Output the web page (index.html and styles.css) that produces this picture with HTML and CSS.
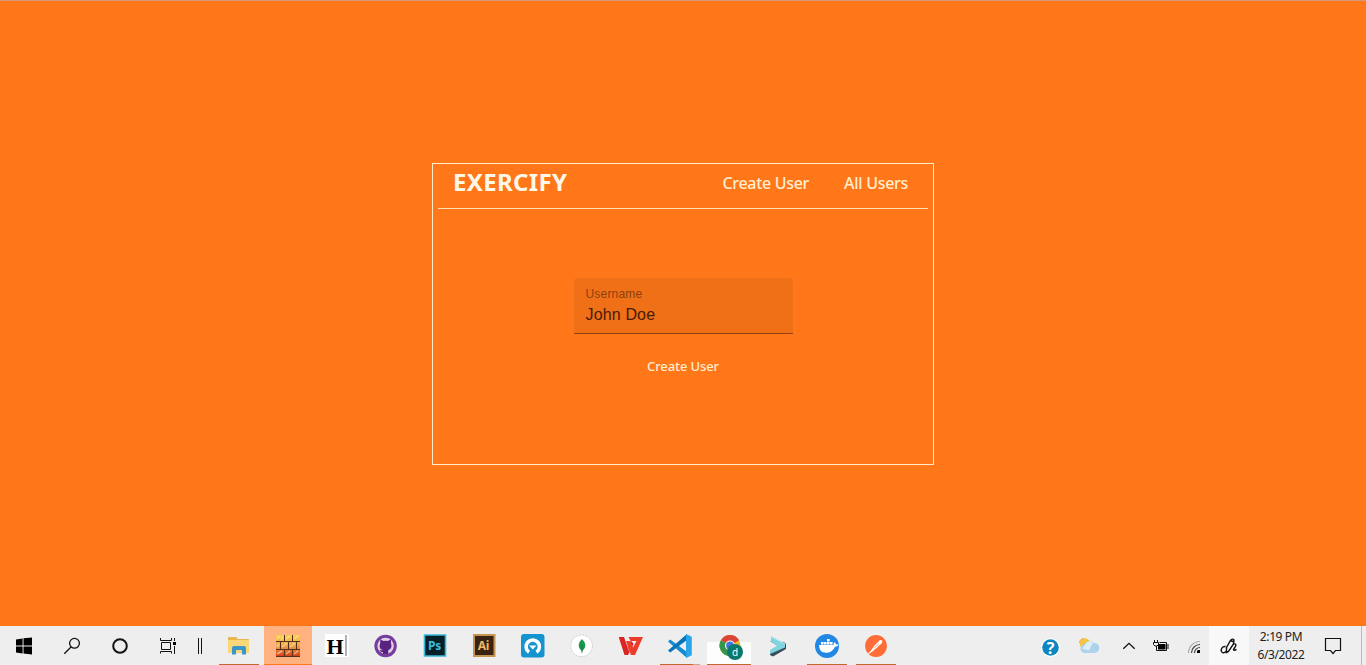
FILE: index.html
```
<!DOCTYPE html>
<html lang="en">
<head>
<meta charset="utf-8">
<title>Exercify</title>
<link rel="stylesheet" href="styles.css">
</head>
<body>
<main class="desktop">
  <section class="card">
    <header class="card-header">
      <h1 class="brand">EXERCIFY</h1>
      <nav class="nav"><a class="nav-create">Create User</a><a class="nav-all">All Users</a></nav>
    </header>
    <form class="form">
      <label class="field"><span class="field-label">Username</span><span class="field-value">John Doe</span></label>
      <button class="submit" type="button">Create User</button>
    </form>
  </section>
</main>
<footer class="taskbar">
  <div class="system">
    <svg class="sys" viewBox="0 626 48 39"><path d="M16 639.4l6.600-.9v7.100H16zM23.500 638.300l8.500-.9v8.200h-8.500zM16 646.500h6.600v7l-6.600-.9zM23.500 646.500H32v7.900l-8.500-.9z"/></svg>
    <svg class="sys" viewBox="48 626 48 39"><g fill="none" stroke="#111" stroke-width="1.3"><circle cx="74.500" cy="643.300" r="4.900"/><path d="M71 647l-6.700 6.700"/></g></svg>
    <svg class="sys" viewBox="96 626 48 39"><circle cx="120" cy="646" r="6.800" fill="none" stroke="#111" stroke-width="2"/></svg>
    <svg class="sys" viewBox="144 626 48 39"><path d="M160.500 638v2.500h11V638M160.500 653.500V651.500h11v2M161.500 642.500h9v7h-9zM174.500 638v3M174.500 646v8" fill="none" stroke="#111"/><path d="M173 642h3v3h-3z"/></svg>
    <svg class="divider" viewBox="192 626 22 39"><path d="M198.500 638v16M201.500 638v16" stroke="#111"/></svg>
  </div>
  <div class="apps">
    <svg class="app" viewBox="214 626 49 39"><path d="M228 638q0-1 1-1h7l2 2h10q1 0 1 1v13h-21z" fill="#e9b64d"/><path d="M229 640h20v13h-21v-12z" fill="#fad779"/><path d="M232 654.500v-6.500q0-2 2-2h10q2 0 2 2v6.500h-4v-4.500h-6v4.500z" fill="#3d96c8"/><path class="run" d="M219 664h40v1h-40z"/></svg>
    <svg class="app" viewBox="263 626 49 39"><defs><linearGradient id="brick" x1="0" y1="635" x2="0" y2="657" gradientUnits="userSpaceOnUse"><stop stop-color="#f8d04a"/><stop offset=".5" stop-color="#efa04b"/><stop offset="1" stop-color="#d63415"/></linearGradient></defs><path d="M264 626h48v39h-48z" fill="#ffb27f"/><path d="M276 635h24v22h-24z" fill="#54301d"/><path d="M276 635h8v6h-8zM285 635h7v6h-7zM293 635h7v6h-7zM276 642h4v7h-4zM281 642h7v7h-7zM289 642h7v7h-7zM297 642h3v7h-3zM276 650h8v6h-8zM285 650h7v6h-7zM293 650h7v6h-7z" fill="url(#brick)"/><path d="M277 639l3-3M281 640l2-4M286 639l4-3M294 639l4-3M277 647l2-3M282 647l5-4M290 647l5-4M277 654l5-3M286 654l4-3M294 654l4-3" stroke="#fff0aa" stroke-width="1.500" opacity=".6"/><path d="M264 664h48v1h-48z" fill="#ff7817"/></svg>
    <svg class="app" viewBox="312 626 49 39"><path d="M325 634h24v23h-24z" fill="#fff"/><text x="326.500" y="653.500" class="h-letter">H</text><path d="M346 635v21" stroke="#888" stroke-width="1.300"/></svg>
    <svg class="app" viewBox="361 626 49 39"><circle cx="385.600" cy="646" r="11.200" fill="#773b9d"/><circle cx="385.600" cy="646" r="8.200" fill="#ddd2e5"/><path d="M380.300 639.500l3.300 1.500q2-.5 4 0l3.300-1.500.1 3.900c1.300 3.500-.4 6-2.700 6.700v4h-5.400v-2c-2 .3-2.700-.8-3.500-2.200 1.500.4 2 .7 3.500.2-2.800-.7-4.100-3.400-2.700-6.700z" fill="#5b2380"/></svg>
    <svg class="app" viewBox="410 626 49 39"><path d="M424.500 635h21v21h-21z" fill="#061e28" stroke="#38b9d8" stroke-width="1.600"/><text x="428" y="650" class="adobe ps">Ps</text></svg>
    <svg class="app" viewBox="459 626 49 39"><path d="M474 635h20.500v21H474z" fill="#382313" stroke="#c49452" stroke-width="2"/><text x="477.700" y="650" class="adobe ai">Ai</text></svg>
    <svg class="app" viewBox="508 626 49 39"><rect x="521" y="634" width="23.500" height="23.500" rx="3" fill="#1594cf"/><path d="M529 652.200a6.700 6.700 0 1 1 7.500 0" fill="none" stroke="#fff" stroke-width="3.600"/><path d="M529 645.500h7.500l-3.700 4z" fill="#fff"/></svg>
    <svg class="app" viewBox="557 626 49 39"><circle cx="581.600" cy="645.800" r="10.800" fill="#fff" stroke="#bbb" stroke-width=".7" stroke-dasharray="2 1"/><path d="M582 639q-7 6.500 0 12.500 7-6 0-12.500" fill="#16994b"/><path d="M582 645v8" stroke="#157240" stroke-width=".8"/></svg>
    <svg class="app" viewBox="606 626 49 39"><path d="M618.700 637h5.300l3.500 10 4-6 2 3-5.500 11h-3.500z" fill="#d92524"/><path d="M626 641h4.500l2.500 6.500 3.500-6.500h-6l-2-4h14.500l-8 18H631z" fill="#ee3c2b"/><path d="M627.500 647l3.500 8" stroke="#f58b70" stroke-width=".8"/></svg>
    <svg class="app" viewBox="655 626 49 39"><path d="M668 641.500l2.200-2L687 652v6z" fill="#168bd1"/><path d="M668 650.500l2.200 2L687 640v-6z" fill="#0875b8"/><path d="M686 634l5.800 2.700v18.600L686 658z" fill="#29a6ea"/><path class="run" d="M660 664h33v1h-33z"/><path d="M693 664h7v1h-7z" fill="#d5a38a"/></svg>
    <svg class="app" viewBox="704 626 49 39"><path d="M707 642h44v23h-44z" fill="#fdfdfd"/><circle cx="730" cy="645.500" r="10.500" fill="#e9bd30"/><path d="M720.900 640.250A10.500 10.500 0 0 1 739.100 640.250L730 645.500z" fill="#dc4437"/><path d="M720.900 640.250A10.500 10.500 0 0 0 730 656l3-7-3-3.500z" fill="#35964b"/><circle cx="730" cy="645.500" r="5" fill="#fff"/><circle cx="730" cy="645.500" r="3.900" fill="#3e79d8"/><circle cx="735" cy="652" r="8" fill="#08796b"/><text x="735" y="655.500" class="profile">d</text><path class="run" d="M707 664h44v1h-44z"/></svg>
    <svg class="app" viewBox="753 626 49 39"><path d="M770 641l8 5-8 5v4l3 1.500 13-7.500v-5l-2-2z" fill="#394e5b"/><path d="M771 636l14 7.500v4L770 654v-4l7-4.300-6-4.200z" fill="#80d4df"/><path d="M771 636.500l14 7.500" stroke="#b7edf0"/></svg>
    <svg class="app" viewBox="802 626 49 39"><circle cx="827" cy="646" r="12" fill="#2388e3"/><path d="M819 645h14.500q0-2 1-3 1.500 1 1.500 2.500 1.500-.5 2.700.2-1 2-3.700 2-2.500 6-9 6-7 0-7-7.700M821 642h2.600v2.600H821zm3 0h2.600v2.600H824zm3 0h2.600v2.600H827zm3 0h2.600v2.600H830zm-3-3h2.600v2.600H827z" fill="#fff"/><path class="run" d="M807 664h40v1h-40z"/></svg>
    <svg class="app" viewBox="851 626 49 39"><circle cx="876" cy="646" r="10.900" fill="#ff6c37"/><path d="M870 652l4-6 6-6q3-.5 2 3l-6.500 6z" fill="#fff"/><path d="M868.500 653.500l5-3.500" stroke="#fff" stroke-width="1.200"/><path d="M874 648l5-4" stroke="#ff6c37" stroke-width=".6"/><path class="run" d="M856 664h40v1h-40z"/></svg>
  </div>
  <div class="tray">
    <svg class="tray-icon" viewBox="1031 626 39 39"><circle cx="1050.500" cy="647.500" r="9.500" fill="#fff"/><circle cx="1050.500" cy="647.500" r="8.300" fill="#0e86c2"/><text x="1050.500" y="653.500" class="help">?</text></svg>
    <svg class="tray-icon" viewBox="1070 626 39 39"><circle cx="1085" cy="643.500" r="5.300" fill="#f8c446"/><path d="M1079.500 643q0-4 4.500-4.500" fill="none" stroke="#f6a92b"/><path d="M1085 653a4.500 4.500 0 0 1 0-9 5.500 5.500 0 0 1 9-1 5 5 0 0 1 .5 10z" fill="#acd2ec"/><path d="M1085 645a5 5 0 0 1 8-2.500l-4 8-7-2z" fill="#dceefa"/></svg>
    <svg class="tray-icon" viewBox="1109 626 39 39"><path d="M1123.300 648.700l5.700-5.400 5.700 5.400" fill="none" stroke="#111" stroke-width="1.300"/></svg>
    <svg class="battery" viewBox="1148 626 30 39"><path d="M1154.500 640v2M1157.500 640v2M1153.500 642.500h5v2l-1.500 1.500h-2l-1.500-1.500zM1156.500 646v4.500h10v-8h-7M1168 644v5" fill="none" stroke="#111"/><path d="M1158 644h7.500v5.500h-7.500z"/></svg>
    <svg class="wifi" viewBox="1178 626 31 39"><g fill="none" stroke-width="1.200"><path d="M1188.500 653a11.500 11.500 0 0 1 11.500-11.500" stroke="#aaa"/><path d="M1191.500 653a8.500 8.500 0 0 1 8.500-8.500M1194.500 653a5.500 5.500 0 0 1 5.500-5.500" stroke="#444"/></g><path d="M1197 653v-2l1-1h2v3z"/></svg>
    <svg class="ink" viewBox="1209 626 40 39"><path d="M1225.500 646.500c-3-.5-5 2.500-4 5 1 2 3.500 1.500 4.500-.5M1226.500 652.500v-5l4-7q2-2.500 3.500-.5l-.5 4-5 7.500zM1233.500 644c2-.5 3 .5 2 2.500l-2 3q0 1.500 3 0M1230.500 640.500l3.500 1.500" fill="none" stroke="#111" stroke-width="1.400"/></svg>
    <div class="clock"><span class="time">2:19 PM</span><span class="date">6/3/2022</span></div>
    <svg class="notice" viewBox="1313 626 48 39"><path d="M1325.500 638.500h15v12h-5l-2.500 3-2.500-3h-5z" fill="none" stroke="#111" stroke-width="1.200"/></svg>
    <div class="show-desktop"></div>
  </div>
</footer>
</body>
</html>
```
FILE: styles.css
```
* { box-sizing: border-box; }
body { margin: 0; height: 665px; overflow: hidden; display: flex; flex-direction: column; font-family: "Noto Sans", sans-serif; }
.desktop { height: 626px; background: #ff7719; border-top: 1px solid #d6987a; display: flex; justify-content: center; align-items: flex-start; padding-top: 162px; }
.card { width: 502px; height: 302px; border: 1px solid #ffecc8; padding: 0 5px; }
.card-header { height: 45px; border-bottom: 1px solid #ffe0b0; display: flex; justify-content: space-between; padding: 0 20px 8px 15px; align-items: center; color: #fff8e8; }
.brand { margin: 0; font-size: 24px; line-height: 36px; font-weight: 700; letter-spacing: .35px; }
.nav { display: flex; gap: 35px; font-size: 16px; line-height: 24px; font-weight: 500; letter-spacing: -.3px; color: #ffeed0; padding-top: 2px; }
.form { display: flex; flex-direction: column; align-items: center; padding-top: 69px; }
.field { width: 219px; height: 56px; display: flex; flex-direction: column; padding: 8px 12px 0; background: #f07018; border-bottom: 1px solid #96400f; border-radius: 4px 4px 0 0; font-family: "Liberation Sans", Arial, sans-serif; }
.field-label { font-size: 12px; line-height: 16px; color: #8c410e; letter-spacing: .18px; }
.field-value { font-size: 16px; line-height: 26px; color: #481b08; letter-spacing: .15px; }
.submit { border: 0; background: none; margin-top: 22px; padding: 0; font: 500 13px/20px "Noto Sans", sans-serif; letter-spacing: -.12px; color: #ffeed0; }
.taskbar { height: 39px; background: #eee; display: flex; }
.system, .apps, .tray { display: flex; }
.tray { margin-left: auto; }
svg { display: block; height: 39px; flex: none; }
.sys { width: 48px; }
.divider { width: 22px; }
.app { width: 49px; }
.run { fill: #c8642d; }
.tray-icon { width: 39px; }
.battery { width: 30px; }
.wifi { width: 31px; }
.ink { width: 40px; background: #f8f8f8; }
.clock { width: 64px; display: flex; flex-direction: column; align-items: center; padding-top: 2px; font-size: 12px; line-height: 18px; letter-spacing: -.4px; color: #222; white-space: nowrap; }
.notice { width: 48px; }
.show-desktop { width: 5px; border-left: 1px solid #bbb; }
.h-letter { font: bold 22px "Liberation Serif", serif; }
.adobe { font: bold 12px "Noto Sans", sans-serif; letter-spacing: -.3px; }
.ps { fill: #39bddd; }
.ai { fill: #efb661; }
.profile { font: 10px "Noto Sans", sans-serif; fill: #fff; text-anchor: middle; }
.help { font: bold 16px "Noto Sans", sans-serif; fill: #fff; text-anchor: middle; }
```
